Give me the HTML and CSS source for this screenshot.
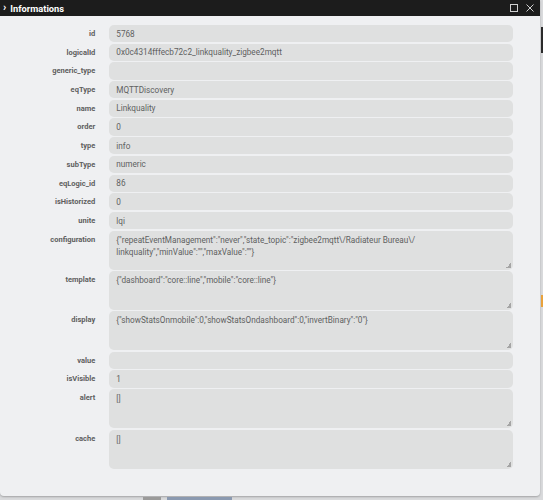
FILE: index.html
```
<!DOCTYPE html>
<html lang="en">
<head>
    <meta charset="UTF-8">
    <meta name="viewport" content="width=device-width, initial-scale=1.0">
    <title>Informations</title>
    <link rel="stylesheet" href="styles.css">
</head>
<body>
    <div class="page">
        <div class="dialog">
            <div class="dialog-title">
                <span class="chevron">&#x203A;</span>
                <span class="title-text">Informations</span>
                <div class="title-buttons">
                    <svg width="8" height="8" viewBox="0 0 8 8"><rect x="0.5" y="0.5" width="7" height="7" fill="none" stroke="#cfcfcf" stroke-width="1"/></svg>
                    <svg width="8" height="8" viewBox="0 0 8 8"><path d="M0.5 0.5 L7.5 7.5 M7.5 0.5 L0.5 7.5" stroke="#cfcfcf" stroke-width="1"/></svg>
                </div>
            </div>
            <form class="info-form">
                <label>id</label>
                <input type="text" value="5768" readonly>
                <label>logicalId</label>
                <input type="text" value="0x0c4314fffecb72c2_linkquality_zigbee2mqtt" readonly>
                <label>generic_type</label>
                <input type="text" value="" readonly>
                <label>eqType</label>
                <input type="text" value="MQTTDiscovery" readonly>
                <label>name</label>
                <input type="text" value="Linkquality" readonly>
                <label>order</label>
                <input type="text" value="0" readonly>
                <label>type</label>
                <input type="text" value="info" readonly>
                <label>subType</label>
                <input type="text" value="numeric" readonly>
                <label>eqLogic_id</label>
                <input type="text" value="86" readonly>
                <label>isHistorized</label>
                <input type="text" value="0" readonly>
                <label>unite</label>
                <input type="text" value="lqi" readonly>
                <label>configuration</label>
                <textarea readonly>{"repeatEventManagement":"never","state_topic":"zigbee2mqtt\/Radiateur Bureau\/&#8203;linkquality","minValue":"","maxValue":""}</textarea>
                <label>template</label>
                <textarea readonly>{"dashboard":"core::line","mobile":"core::line"}</textarea>
                <label>display</label>
                <textarea readonly>{"showStatsOnmobile":0,"showStatsOndashboard":0,"invertBinary":"0"}</textarea>
                <label>value</label>
                <input type="text" value="" readonly>
                <label>isVisible</label>
                <input type="text" value="1" readonly>
                <label>alert</label>
                <textarea readonly>[]</textarea>
                <label>cache</label>
                <textarea readonly>[]</textarea>
            </form>
        </div>
        <div class="page-side">
            <span class="side-dark"></span>
            <span class="side-orange"></span>
        </div>
    </div>
    <div class="page-bar">
        <span class="page-btn"></span>
        <span class="page-tab"></span>
    </div>
</body>
</html>
```

FILE: styles.css
```
body {
    margin: 0;
    padding: 0;
    background: #d9dadc;
    font-family: Roboto, "Liberation Sans", sans-serif;
    overflow: hidden;
}
.page {
    display: flex;
}
.dialog {
    width: 540px;
    height: 496px;
    flex-shrink: 0;
    background: #eff0f2;
    border-radius: 0 0 4px 4px;
    box-shadow: 0 1px 2px rgba(0, 0, 0, 0.25);
}
.dialog-title {
    display: flex;
    align-items: center;
    height: 16px;
    background: #1c1c1c;
    color: #fff;
    padding: 0 5px 0 3px;
}
.chevron {
    font-weight: bold;
    font-size: 11px;
    line-height: 16px;
    margin-right: 4px;
    margin-top: -1px;
}
.title-text {
    font-weight: bold;
    font-size: 9.3px;
}
.title-buttons {
    margin-left: auto;
    display: flex;
    gap: 8px;
    margin-right: 1px;
}
.info-form {
    display: grid;
    grid-template-columns: 95.3px 404px;
    column-gap: 14px;
    row-gap: 1.4px;
    padding-top: 9px;
}
.info-form label {
    text-align: right;
    font-weight: bold;
    font-size: 7.5px;
    line-height: 17.3px;
    color: #5e5e5e;
}
.info-form input,
.info-form textarea {
    box-sizing: border-box;
    width: 100%;
    margin: 0;
    border: none;
    border-radius: 5px;
    background: #dfe0e0;
    color: #606060;
    font-family: Roboto, "Liberation Sans", sans-serif;
    font-size: 8.2px;
    outline: none;
}
.info-form input {
    height: 17.3px;
    padding: 0 7px;
}
.info-form textarea {
    height: 39px;
    padding: 3px 7px;
    line-height: 12px;
    resize: none;
    background-image: linear-gradient(135deg, transparent 50%, #a5a5a5 50%);
    background-size: 5px 5px;
    background-position: right 2px bottom 2px;
    background-repeat: no-repeat;
}
.page-side {
    display: flex;
    flex-direction: column;
    width: 3px;
    margin-left: 1px;
}
.side-dark {
    height: 26px;
    margin-top: 27px;
    background: #2a2a2a;
}
.side-orange {
    height: 12px;
    margin-top: 242px;
    background: #e9a23b;
}
.page-bar {
    display: flex;
    padding-left: 143px;
    gap: 6px;
    margin-top: 1px;
}
.page-btn {
    width: 18px;
    height: 4px;
    background: #9a9a9a;
}
.page-tab {
    width: 65px;
    height: 4px;
    background: #8a99b0;
}
```
